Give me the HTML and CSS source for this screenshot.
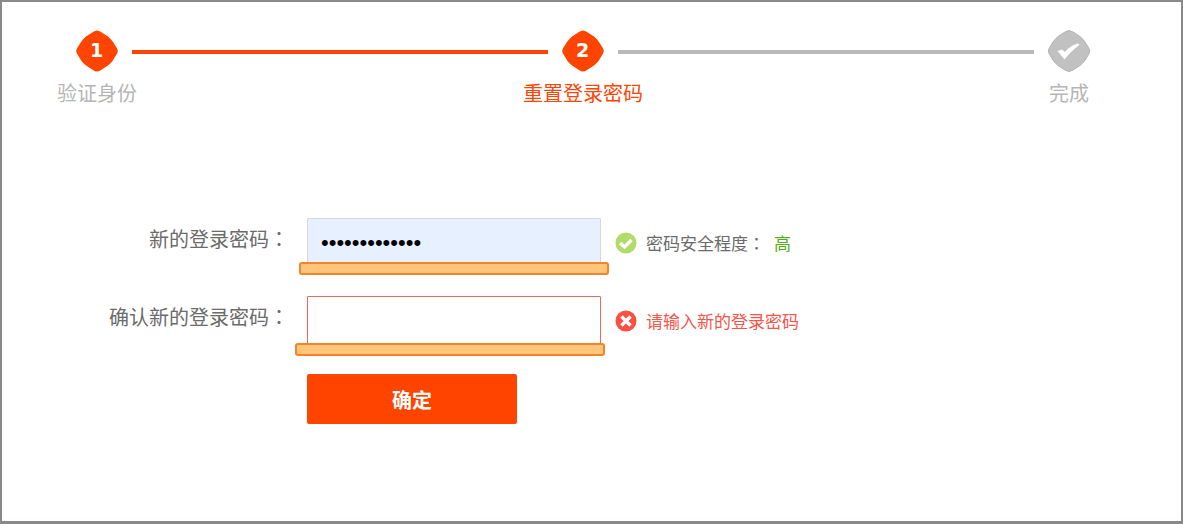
FILE: index.html
```html
<!DOCTYPE html>
<html lang="zh-CN">
<head>
<meta charset="utf-8">
<meta name="viewport" content="width=device-width, initial-scale=1">
<title>重置登录密码</title>
<link rel="stylesheet" href="styles.css">
</head>
<body>
<main class="page">
  <ol class="steps">
    <li class="step step-done">
      <svg class="marker" viewBox="0 0 42 42" aria-hidden="true"><path class="marker-shape" d="M17 2Q21-1 25 2L32 6.500Q35 9 37 12L40.500 17.500Q43 21 40.500 24.500L36.500 31Q35 33 32 35.500L25 40Q21 43 17 40L10 35.500Q7 33 5.500 31L1.500 24.500Q-1 21 1.500 17.500L5 12Q7 9 10 6.500Z"/><text class="marker-number" x="20.500" y="27">1</text></svg>
      <span class="step-label">验证身份</span>
    </li>
    <li class="line line-done" aria-hidden="true"></li>
    <li class="step step-current" aria-current="step">
      <svg class="marker" viewBox="0 0 42 42" aria-hidden="true"><path class="marker-shape" d="M17 2Q21-1 25 2L32 6.500Q35 9 37 12L40.500 17.500Q43 21 40.500 24.500L36.500 31Q35 33 32 35.500L25 40Q21 43 17 40L10 35.500Q7 33 5.500 31L1.500 24.500Q-1 21 1.500 17.500L5 12Q7 9 10 6.500Z"/><text class="marker-number" x="20.500" y="27">2</text></svg>
      <span class="step-label">重置登录密码</span>
    </li>
    <li class="line" aria-hidden="true"></li>
    <li class="step">
      <svg class="marker" viewBox="0 0 42 42" aria-hidden="true"><path class="marker-shape marker-rim" d="M17 2Q21-1 25 2L32 6.500Q35 9 37 12L40.500 17.500Q43 21 40.500 24.500L36.500 31Q35 33 32 35.500L25 40Q21 43 17 40L10 35.500Q7 33 5.500 31L1.500 24.500Q-1 21 1.500 17.500L5 12Q7 9 10 6.500Z"/><path class="marker-tick" d="M9.500 21L14 19.500L17 22Q22 15.500 30 13.500L31.500 15Q22 22 16.500 29.500Z"/></svg>
      <span class="step-label">完成</span>
    </li>
  </ol>

  <form class="form">
    <div class="row">
      <label class="label" for="new-password">新的登录密码<span class="colon" lang="zh-TW">：</span></label>
      <div class="field">
        <input class="input input-filled" id="new-password" type="password" value="abcdefghijklm">
        <span class="highlight highlight-first"></span>
      </div>
      <p class="hint">
        <svg class="hint-icon" viewBox="0 0 22 22" aria-hidden="true"><circle cx="11" cy="11" r="10.5" fill="#b1dc6b"/><path d="M5 11L9.500 15L16.500 8" fill="none" stroke="#fff" stroke-width="3.4"/></svg>
        <span>密码安全程度<span class="colon" lang="zh-TW">：</span></span>
        <strong class="strength">高</strong>
      </p>
    </div>
    <div class="row">
      <label class="label" for="confirm-password">确认新的登录密码<span class="colon" lang="zh-TW">：</span></label>
      <div class="field">
        <input class="input input-error" id="confirm-password" type="password">
        <span class="highlight highlight-second"></span>
      </div>
      <p class="hint hint-error">
        <svg class="hint-icon" viewBox="0 0 22 22" aria-hidden="true"><circle cx="11" cy="11" r="10.5" fill="#fb4f42"/><path d="M6.500 6.500L15.500 15.500M15.500 6.500L6.500 15.500" fill="none" stroke="#fff" stroke-width="3.4"/></svg>
        <span>请输入新的登录密码</span>
      </p>
    </div>
    <button class="submit" type="button">确定</button>
  </form>
</main>
</body>
</html>
```
FILE: styles.css
```css
* {
  box-sizing: border-box;
}

body {
  margin: 0;
  background: #fff;
  color: #6b6b6b;
  font-family: "Noto Sans CJK SC", sans-serif;
  font-size: 20px;
  line-height: 24px;
}

.page {
  min-height: 100vh;
  padding: 28px 91px 0 74px;
  border: 2px solid #8a8888;
  border-bottom-width: 3px;
}

.steps {
  display: flex;
  gap: 14px;
  margin: 0;
  padding: 0;
  list-style: none;
}

.step {
  display: flex;
  flex-direction: column;
  align-items: center;
  gap: 9px;
  width: 42px;
  color: #b5b5b5;
}

.step-label {
  white-space: nowrap;
}

.step-current {
  color: #fc4507;
}

.marker {
  display: block;
  width: 42px;
  height: 42px;
}

.marker-shape {
  fill: #ff4400;
}

.marker-rim {
  fill: #c1c1c1;
  stroke: #b3b3b3;
  stroke-width: 1;
}

.marker-tick {
  fill: #fff;
}

.marker-number {
  fill: #fff;
  font-family: "DejaVu Sans", sans-serif;
  font-size: 19px;
  font-weight: 700;
  text-anchor: middle;
}

.line {
  flex: 1;
  height: 4px;
  margin-top: 20px;
  background: #b9b9b9;
}

.line-done {
  background: #fc4507;
}

.form {
  display: flex;
  flex-direction: column;
  gap: 28px;
  margin-top: 113px;
}

.row {
  display: flex;
}

.label {
  width: 213px;
  line-height: 42px;
  text-align: right;
  white-space: nowrap;
}

.colon {
  font-family: "Noto Sans CJK TC", sans-serif;
}

.field {
  position: relative;
  width: 294px;
  margin-left: 18px;
}

.input {
  display: block;
  width: 100%;
  height: 50px;
  padding: 0 13px;
  border: 1px solid #d5d5dd;
  border-radius: 1px;
  outline: none;
  background: #fff;
  color: #000;
  font-family: "Liberation Sans", sans-serif;
  font-size: 22px;
}

.input-filled {
  background: #e6f0fe;
}

.input-error {
  border-color: #ea6a56;
}

.highlight {
  position: absolute;
  width: 310px;
  height: 13px;
  border: 2px solid #f5832a;
  border-radius: 3px;
  background: #ffc57a;
}

.highlight-first {
  top: 44px;
  left: -8px;
}

.highlight-second {
  top: 47px;
  left: -12px;
}

.hint {
  display: flex;
  align-items: center;
  gap: 9px;
  height: 50px;
  margin: 0 0 0 14px;
  font-size: 17px;
  white-space: nowrap;
}

.hint-error {
  color: #f75549;
}

.hint-icon {
  width: 22px;
  height: 22px;
}

.strength {
  color: #55ab18;
  font-weight: 400;
}

.submit {
  width: 210px;
  height: 50px;
  margin-left: 231px;
  padding: 2px 0 0;
  border: 0;
  border-radius: 2px;
  background: #ff4400;
  color: #fff;
  font: 700 20px/24px "Noto Sans CJK SC", sans-serif;
}
```
